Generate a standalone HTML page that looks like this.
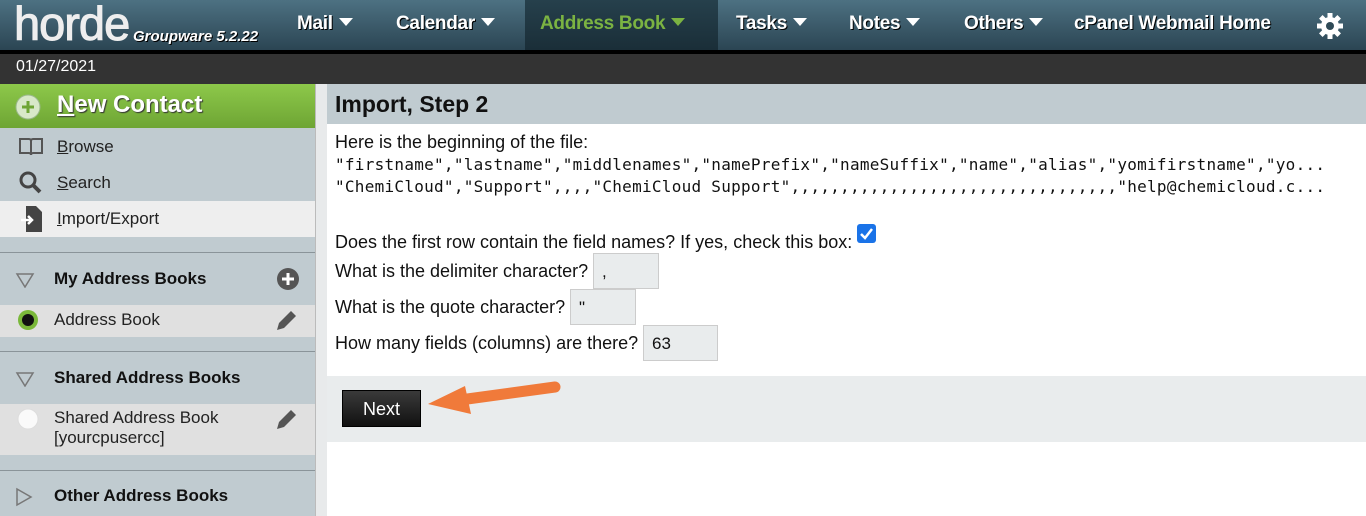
<!DOCTYPE html>
<html><head><style>
*{margin:0;padding:0;box-sizing:border-box}
body{width:1366px;height:516px;overflow:hidden;font-family:"Liberation Sans",Arial,sans-serif;background:#fff;position:relative}
.top{position:absolute;left:0;top:0;width:1366px;height:50px;background:linear-gradient(#4d7182,#2b4553)}
.blk{position:absolute;left:0;top:50px;width:1366px;height:4px;background:#000}
.date{position:absolute;left:0;top:54px;width:1366px;height:30px;background:#333;color:#fff;font-size:16px;padding:4px 0 0 16px}
.logo{position:absolute;left:14px;top:-4px;color:#eee;font-size:47px;letter-spacing:-1px;font-weight:normal;-webkit-text-stroke:1px #eee}
.gw{position:absolute;left:133px;top:28px;color:#fff;font-size:15px;font-style:italic;font-weight:bold;text-shadow:1px 1px 0 #000}
.nav{position:absolute;top:13px;color:#fff;font-size:19px;font-weight:bold;text-shadow:1px 1px 0 #000;white-space:nowrap;letter-spacing:-0.3px}
.tri{display:inline-block;width:0;height:0;border-left:7px solid transparent;border-right:7px solid transparent;border-top:8px solid #fff;margin-left:6px;vertical-align:3px}
.abtab{position:absolute;left:525px;top:0;width:193px;height:50px;background:linear-gradient(#26404c,#1a2e38)}
.side{position:absolute;left:0;top:84px;width:315px;height:432px;background:#c0cbd0}
.div{position:absolute;left:315px;top:84px;width:12px;height:432px;background:#e8eaeb;border-left:1px solid #bbb}
.nc{position:absolute;left:0;top:84px;width:315px;height:44px;background:linear-gradient(#8dc84a,#6ea534);color:#fff;font-size:24px;font-weight:bold;text-shadow:1px 1px 1px #333;padding:7px 0 0 57px}
.si{position:absolute;left:57px;font-size:17px;color:#222}
.hdr{position:absolute;left:0;width:315px;font-size:17px;font-weight:bold;color:#111;padding-left:54px}
.line{position:absolute;left:0;width:315px;height:1px;background:#8a9499}
.row{position:absolute;left:0;width:315px;background:#e0e0e0}
.mh{position:absolute;left:327px;top:84px;width:1039px;height:40px;background:#c0cbd0;font-size:23px;font-weight:bold;color:#111;padding:7px 0 0 8px}
.t{position:absolute;left:335px;font-size:18px;color:#111;white-space:nowrap}
.mono{position:absolute;left:335px;font-family:"DejaVu Sans Mono","Liberation Mono",monospace;font-size:16px;color:#111;white-space:nowrap;letter-spacing:0.27px}
.inp{position:absolute;height:36px;background:#e9eced;border:1px solid #ccc;font-size:17px;padding:8px 0 0 8px;color:#111}
.bar{position:absolute;left:327px;top:376px;width:1039px;height:66px;background:#e9eced}
.btn{position:absolute;left:342px;top:390px;width:79px;height:37px;background:linear-gradient(#3a3a3a,#111);border:1px solid #000;color:#fff;font-size:18px;text-align:center;padding-top:8px}
</style></head><body>
<div class="top"></div>
<div class="abtab"></div>
<div class="blk"></div>
<div class="date">01/27/2021</div>
<div class="logo">horde</div>
<div class="gw">Groupware 5.2.22</div>
<div class="nav" style="left:297px">Mail<span class="tri"></span></div>
<div class="nav" style="left:396px">Calendar<span class="tri"></span></div>
<div class="nav" style="left:540px;color:#7bb342;text-shadow:none">Address Book<span class="tri" style="border-top-color:#7bb342"></span></div>
<div class="nav" style="left:736px">Tasks<span class="tri"></span></div>
<div class="nav" style="left:849px">Notes<span class="tri"></span></div>
<div class="nav" style="left:964px">Others<span class="tri"></span></div>
<div class="nav" style="left:1074px">cPanel Webmail Home</div>
<svg style="position:absolute;left:1315px;top:11px" width="30" height="30" viewBox="0 0 30 30"><g fill="#fff"><circle cx="15" cy="15" r="9"/><g stroke="#fff" stroke-width="5"><line x1="15" y1="2" x2="15" y2="28"/><line x1="2" y1="15" x2="28" y2="15"/><line x1="5.8" y1="5.8" x2="24.2" y2="24.2"/><line x1="24.2" y1="5.8" x2="5.8" y2="24.2"/></g></g><circle cx="15" cy="15" r="4" fill="#2f4a57"/></svg>

<div class="side"></div>
<div class="div"></div>
<div class="nc"><u>N</u>ew Contact</div>
<svg style="position:absolute;left:15px;top:94px" width="26" height="26"><circle cx="13" cy="13" r="12" fill="#d8e8c8" stroke="#9ab88a"/><path d="M13 7v12M7 13h12" stroke="#6ea534" stroke-width="3"/></svg>
<svg style="position:absolute;left:18px;top:136px" width="26" height="22"><path d="M2 3h9q2 0 2 2v14q0-2-2-2H2zM24 3h-9q-2 0-2 2v14q0-2 2-2h9z" fill="none" stroke="#555" stroke-width="2"/></svg>
<div class="si" style="top:137px"><u>B</u>rowse</div>
<svg style="position:absolute;left:18px;top:170px" width="26" height="26"><circle cx="10" cy="10" r="7" fill="none" stroke="#444" stroke-width="3"/><path d="M15 15l7 7" stroke="#444" stroke-width="4"/></svg>
<div class="si" style="top:173px"><u>S</u>earch</div>
<div class="row" style="top:201px;height:36px;background:#eee"></div>
<svg style="position:absolute;left:20px;top:205px" width="24" height="28"><path d="M6 1h10l6 6v20H6z" fill="#444"/><path d="M1 15h11M8 11l4 4-4 4" stroke="#fff" stroke-width="2.5" fill="none"/></svg>
<div class="si" style="top:209px"><u>I</u>mport/Export</div>
<div class="line" style="top:252px"></div>
<svg style="position:absolute;left:15px;top:272px" width="20" height="16"><path d="M2 2h16L10 15z" fill="none" stroke="#777" stroke-width="1.5"/></svg>
<div class="hdr" style="top:269px">My Address Books</div>
<svg style="position:absolute;left:276px;top:267px" width="24" height="24"><circle cx="12" cy="12" r="11" fill="#555"/><path d="M12 6v12M6 12h12" stroke="#fff" stroke-width="3"/></svg>
<div class="row" style="top:305px;height:32px"></div>
<svg style="position:absolute;left:16px;top:308px" width="24" height="24"><circle cx="12" cy="12" r="10" fill="#7ab83a"/><circle cx="12" cy="12" r="6" fill="#111"/></svg>
<div class="si" style="top:310px;left:54px">Address Book</div>
<svg style="position:absolute;left:274px;top:307px" width="26" height="26"><path d="M3 23l2-7L17 4l5 5L10 21z" fill="#555"/></svg>
<div class="line" style="top:351px"></div>
<svg style="position:absolute;left:15px;top:371px" width="20" height="16"><path d="M2 2h16L10 15z" fill="none" stroke="#777" stroke-width="1.5"/></svg>
<div class="hdr" style="top:368px">Shared Address Books</div>
<div class="row" style="top:404px;height:51px"></div>
<svg style="position:absolute;left:16px;top:407px" width="24" height="24"><circle cx="12" cy="12" r="10" fill="#fafafa" stroke="#ddd"/></svg>
<div class="si" style="top:408px;left:54px;line-height:20px">Shared Address Book<br>[yourcpusercc]</div>
<svg style="position:absolute;left:274px;top:406px" width="26" height="26"><path d="M3 23l2-7L17 4l5 5L10 21z" fill="#555"/></svg>
<div class="line" style="top:470px"></div>
<svg style="position:absolute;left:15px;top:487px" width="18" height="20"><path d="M2 2v16l14-8z" fill="none" stroke="#777" stroke-width="1.5"/></svg>
<div class="hdr" style="top:486px">Other Address Books</div>

<div class="mh">Import, Step 2</div>
<div class="t" style="top:132px">Here is the beginning of the file:</div>
<div class="mono" style="top:155px">"firstname","lastname","middlenames","namePrefix","nameSuffix","name","alias","yomifirstname","yo...</div>
<div class="mono" style="top:177px">"ChemiCloud","Support",,,,"ChemiCloud Support",,,,,,,,,,,,,,,,,,,,,,,,,,,,,,,,,"help@chemicloud.c...</div>
<div class="t" style="top:232px">Does the first row contain the field names? If yes, check this box:</div>
<svg style="position:absolute;left:857px;top:224px" width="19" height="19"><rect width="19" height="19" rx="3" fill="#1a73e8"/><path d="M4 10l4 4 7-9" stroke="#fff" stroke-width="2.5" fill="none"/></svg>
<div class="t" style="top:261px">What is the delimiter character?</div>
<div class="inp" style="left:593px;top:253px;width:66px">,</div>
<div class="t" style="top:297px">What is the quote character?</div>
<div class="inp" style="left:570px;top:289px;width:66px">"</div>
<div class="t" style="top:333px">How many fields (columns) are there?</div>
<div class="inp" style="left:643px;top:325px;width:75px">63</div>
<div class="bar"></div>
<div class="btn">Next</div>
<svg style="position:absolute;left:420px;top:378px" width="145" height="40"><path d="M135 9L40 22" stroke="#f07a3a" stroke-width="11" stroke-linecap="round"/><path d="M8 26L45 8l6 28z" fill="#f07a3a"/></svg>
</body></html>
